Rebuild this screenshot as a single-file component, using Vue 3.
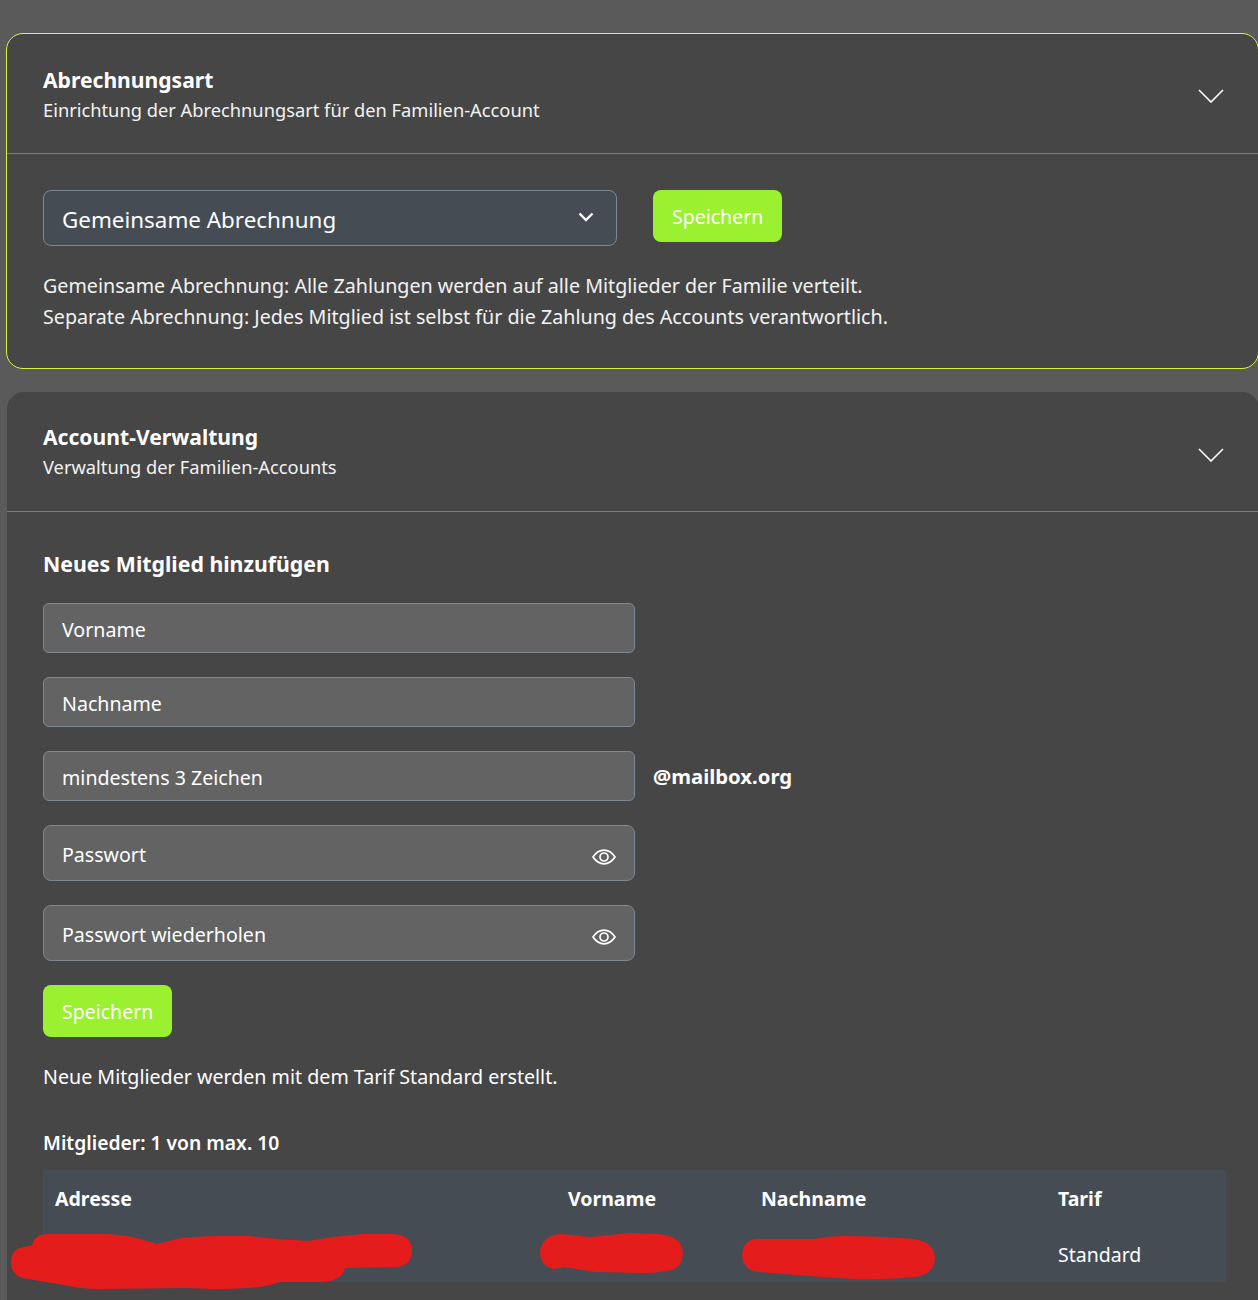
<template>
  <div class="page">
    <section class="card card-active">
      <header class="card-header">
        <div>
          <h2>Abrechnungsart</h2>
          <p>Einrichtung der Abrechnungsart für den Familien-Account</p>
        </div>
        <svg class="toggle" width="26" height="14" viewBox="0 0 26 14" fill="none" stroke="currentColor" stroke-width="1.6">
          <path d="M1 1l12 12L25 1" />
        </svg>
      </header>
      <div class="card-body">
        <div class="billing-row">
          <div class="select-wrap">
            <select v-model="billing">
              <option>Gemeinsame Abrechnung</option>
              <option>Separate Abrechnung</option>
            </select>
            <svg class="select-arrow" width="16" height="10" viewBox="0 0 16 10" fill="none" stroke="currentColor" stroke-width="2.4">
              <path d="M1.5 1.5L8 8l6.5-6.5" />
            </svg>
          </div>
          <button class="save-btn">Speichern</button>
        </div>
        <p class="hint">
          Gemeinsame Abrechnung: Alle Zahlungen werden auf alle Mitglieder der Familie verteilt.<br />
          Separate Abrechnung: Jedes Mitglied ist selbst für die Zahlung des Accounts verantwortlich.
        </p>
      </div>
    </section>

    <section class="card">
      <header class="card-header">
        <div>
          <h2>Account-Verwaltung</h2>
          <p>Verwaltung der Familien-Accounts</p>
        </div>
        <svg class="toggle" width="26" height="14" viewBox="0 0 26 14" fill="none" stroke="currentColor" stroke-width="1.6">
          <path d="M1 1l12 12L25 1" />
        </svg>
      </header>
      <div class="card-body">
        <h3>Neues Mitglied hinzufügen</h3>
        <form class="member-form" @submit.prevent>
          <input v-model="firstName" class="field" type="text" placeholder="Vorname" />
          <input v-model="lastName" class="field" type="text" placeholder="Nachname" />
          <div class="mail-row">
            <input v-model="mailbox" class="field" type="text" placeholder="mindestens 3 Zeichen" />
            <span class="domain">@mailbox.org</span>
          </div>
          <div v-for="item in passwords" :key="item" class="password-wrap">
            <input class="field field-tall" type="password" :placeholder="item" />
            <svg class="eye" width="24" height="16" viewBox="0 0 24 16" fill="none" stroke="currentColor" stroke-width="1.7">
              <path d="M1 8c3-4.400 6.800-6.800 11-6.800S20 3.600 23 8c-3 4.400-6.800 6.800-11 6.800S4 12.400 1 8z" />
              <circle cx="12" cy="8" r="4" />
            </svg>
          </div>
          <button class="save-btn">Speichern</button>
        </form>
        <p class="tariff-note">Neue Mitglieder werden mit dem Tarif Standard erstellt.</p>
        <p class="member-count">Mitglieder: 1 von max. 10</p>
        <table>
          <thead>
            <tr>
              <th class="col-address">Adresse</th>
              <th class="col-first">Vorname</th>
              <th class="col-last">Nachname</th>
              <th>Tarif</th>
            </tr>
          </thead>
          <tbody>
            <tr v-for="member in members" :key="member.tariff">
              <td>{{ member.address }}</td>
              <td>{{ member.first }}</td>
              <td>{{ member.last }}</td>
              <td>{{ member.tariff }}</td>
            </tr>
          </tbody>
        </table>
      </div>
    </section>

    <!-- redaction scribbles painted over the member row -->
    <svg class="scribbles" width="1258" height="1300" viewBox="0 0 1258 1300" fill="#e51c1c">
      <path d="M32 1245Q35 1234 48 1234L108 1234Q125 1235 137 1238L157 1244L181 1238Q215 1235 249 1236L277 1239L309 1241Q335 1236 362 1234L394 1234Q412 1236 412 1250Q412 1266 396 1267L345 1268Q342 1281 321 1282L279 1282Q265 1289 213 1289L185 1288L100 1289Q80 1289 64 1285L28 1279Q11 1277 11 1263Q11 1248 25 1247z" />
      <path d="M540 1253Q541 1235 562 1234L590 1237L630 1233L658 1234Q682 1236 683 1253Q682 1270 666 1271Q655 1273 646 1273L595 1272L564 1267L554 1269Q541 1267 540 1253z" />
      <path d="M742 1255Q743 1240 756 1239L814 1239Q828 1236 842 1236Q880 1236 914 1239Q934 1242 935 1258Q934 1275 914 1277Q885 1280 854 1279L822 1277L758 1272Q743 1270 742 1255z" />
    </svg>
  </div>
</template>

<script setup>
import { ref } from 'vue';

const billing = ref('Gemeinsame Abrechnung');
const firstName = ref('');
const lastName = ref('');
const mailbox = ref('');

const passwords = ['Passwort', 'Passwort wiederholen'];

const members = [
  { address: '', first: '', last: '', tariff: 'Standard' }
];
</script>

<style>
body {
  background: #5a5a5a;
}
</style>

<style scoped>
.page {
  position: relative;
  height: 1300px;
  overflow: hidden;
  padding: 33px 0 0 6px;
  box-sizing: border-box;
  background: #5a5a5a;
  color: #fff;
  font-family: "Noto Sans", "Open Sans", sans-serif;
}

.card {
  width: 1253px;
  margin-bottom: 23px;
  background: #464646;
  border: 1px solid transparent;
  border-radius: 17px;
  box-sizing: border-box;
}

.card + .card {
  width: 1252px;
  margin-left: 1px;
  padding-bottom: 40px;
  border-width: 0;
}

.card + .card .card-header {
  padding: 1px 35px 0 36px;
}

.card + .card .toggle {
  margin-top: 5px;
}

.card-active {
  border-color: #d5f53f;
}

.card-header {
  display: flex;
  justify-content: space-between;
  align-items: center;
  height: 120px;
  padding: 3px 34px 0 36px;
  box-sizing: border-box;
  border-bottom: 1px solid #7c7c7c;
}

.card-header h2 {
  margin: 0;
  font-size: 21.100px;
  font-weight: 700;
  line-height: 30px;
}

.card-header p {
  margin: 0;
  font-size: 18.300px;
  line-height: 30px;
  color: #f2f2f2;
}

.toggle {
  margin-top: 1px;
}

.card-body {
  padding: 36px 32px 0 36px;
}

.billing-row {
  display: flex;
  align-items: flex-start;
  gap: 36px;
}

.select-wrap {
  position: relative;
  width: 574px;
}

select {
  display: block;
  width: 100%;
  height: 56px;
  padding: 2px 18px 0;
  appearance: none;
  background: #454c54;
  border: 1px solid #7d8894;
  border-radius: 8px;
  color: #fff;
  font: inherit;
  font-size: 22.400px;
}

.select-arrow {
  position: absolute;
  top: 22px;
  right: 23px;
  pointer-events: none;
}

.save-btn {
  height: 52px;
  padding: 0 19px;
  background: #9bf02f;
  border: none;
  border-radius: 8px;
  color: #fff;
  font: inherit;
  font-size: 19.500px;
}

.hint {
  margin: 24px 0 36px;
  font-size: 19.700px;
  line-height: 31px;
  color: #f2f2f2;
}

h3 {
  margin: 0;
  font-size: 21.300px;
  font-weight: 700;
  line-height: 32px;
}

.member-form {
  display: flex;
  flex-direction: column;
  align-items: flex-start;
  gap: 24px;
  margin-top: 23px;
}

.field {
  display: block;
  width: 592px;
  height: 50px;
  padding: 2px 18px 0;
  box-sizing: border-box;
  background: #636363;
  border: 1px solid #7d8894;
  border-radius: 6px;
  color: #fff;
  font: inherit;
  font-size: 19.600px;
}

.field::placeholder {
  color: #fff;
  opacity: 1;
}

.field-tall {
  height: 56px;
  border-radius: 8px;
}

.mail-row {
  display: flex;
  align-items: center;
  gap: 18px;
}

.domain {
  font-size: 20.300px;
  font-weight: 700;
}

.password-wrap {
  position: relative;
}

.eye {
  position: absolute;
  top: 24px;
  right: 19px;
}

.tariff-note {
  margin: 25px 0 0;
  font-size: 19.650px;
  line-height: 30px;
}

.member-count {
  margin: 36px 0 0;
  font-size: 19.300px;
  font-weight: 600;
  line-height: 30px;
}

table {
  width: 1183px;
  margin-top: 12px;
  background: #454c54;
  border-collapse: collapse;
  table-layout: fixed;
  font-size: 19.500px;
}

th,
td {
  height: 56px;
  padding: 0 12px;
  box-sizing: border-box;
  text-align: left;
}

th {
  font-weight: 700;
}

.col-address {
  width: 513px;
}

.col-first {
  width: 193px;
}

.col-last {
  width: 297px;
}

.scribbles {
  position: absolute;
  top: 0;
  left: 0;
  pointer-events: none;
}
</style>
